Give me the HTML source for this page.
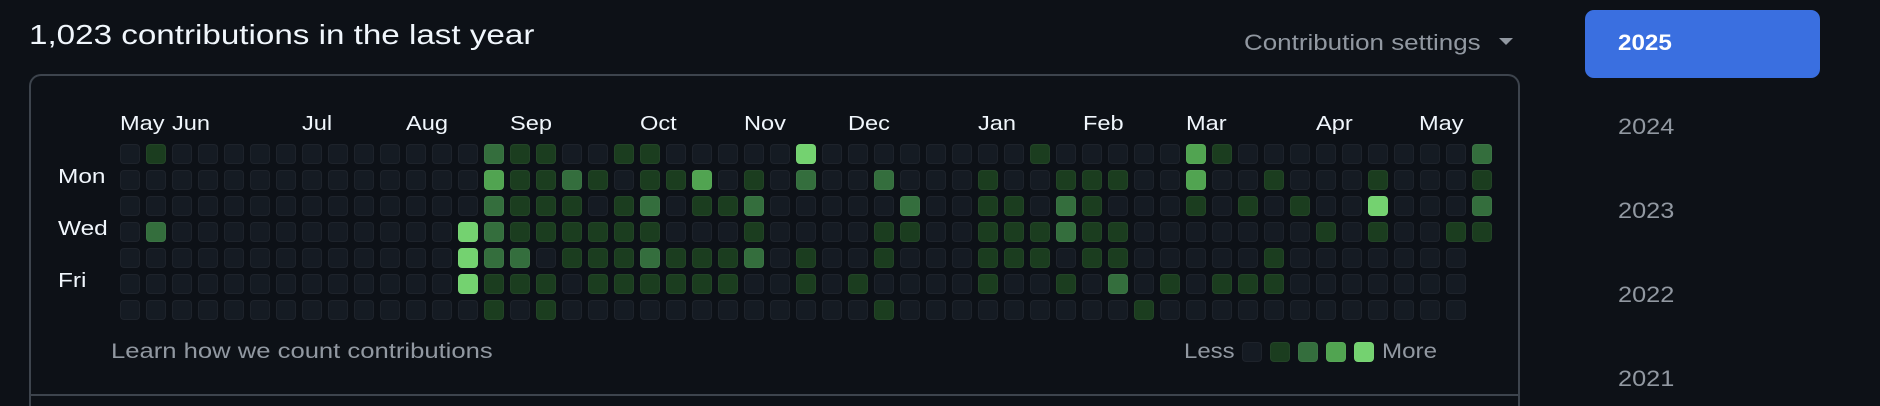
<!DOCTYPE html>
<html><head><meta charset="utf-8"><style>
html,body{margin:0;padding:0;background:#0d1117;width:1880px;height:406px;overflow:hidden;font-family:"Liberation Sans",sans-serif;position:relative}
.a{position:absolute;white-space:nowrap;transform-origin:0 50%}
.t{left:29px;top:19px;font-size:28px;color:#f0f6fc;transform:scaleX(1.185)}
.cs{left:1244px;top:30px;font-size:22px;color:#9198a1;transform:scaleX(1.18)}
.car{left:1499px;top:38px;width:0;height:0;border-left:7px solid transparent;border-right:7px solid transparent;border-top:7px solid #9198a1}
.box{left:29px;top:74px;width:1491px;height:332px;border:2px solid #3d444d;border-bottom:none;border-radius:12px 12px 0 0;box-sizing:border-box}
.hl{left:31px;top:394px;width:1487px;height:2px;background:#3d444d}
.m{font-size:20px;color:#f0f6fc;top:113px;transform:scaleX(1.18)}
.d{font-size:20px;color:#f0f6fc;left:58px;transform:scaleX(1.22)}
.c{position:absolute;width:20px;height:20px;border-radius:4px;box-sizing:border-box;border:1px solid rgba(255,255,255,0.04)}
.l0{background:#151b23}.l1{background:#1b3d1f}.l2{background:#346e3d}.l3{background:#51a451}.l4{background:#74d270}
.g{font-size:21px;color:#9198a1;top:340px}
.yb{left:1585px;top:10px;width:235px;height:68px;background:#3a6fe0;border-radius:9px}
.y{font-size:22px;left:1618px;color:#9198a1;transform:scaleX(1.15)}
</style></head><body>
<div class="a t">1,023 contributions in the last year</div>
<div class="a cs">Contribution settings</div>
<div class="a car"></div>
<div class="a box"></div>
<div class="a hl"></div>
<div class="a m" style="left:120px">May</div>
<div class="a m" style="left:172px">Jun</div>
<div class="a m" style="left:302px">Jul</div>
<div class="a m" style="left:406px">Aug</div>
<div class="a m" style="left:510px">Sep</div>
<div class="a m" style="left:640px">Oct</div>
<div class="a m" style="left:744px">Nov</div>
<div class="a m" style="left:848px">Dec</div>
<div class="a m" style="left:978px">Jan</div>
<div class="a m" style="left:1083px">Feb</div>
<div class="a m" style="left:1186px">Mar</div>
<div class="a m" style="left:1316px">Apr</div>
<div class="a m" style="left:1419px">May</div>
<div class="a d" style="top:166px">Mon</div>
<div class="a d" style="top:218px">Wed</div>
<div class="a d" style="top:270px">Fri</div>
<div id="grid"></div>
<div class="a g" style="left:111px;transform:scaleX(1.22)">Learn how we count contributions</div>
<div class="a g" style="left:1184px;transform:scaleX(1.14)">Less</div>
<div class="c l0" style="left:1242px;top:342px"></div>
<div class="c l1" style="left:1270px;top:342px"></div>
<div class="c l2" style="left:1298px;top:342px"></div>
<div class="c l3" style="left:1326px;top:342px"></div>
<div class="c l4" style="left:1354px;top:342px"></div>
<div class="a g" style="left:1382px;transform:scaleX(1.15)">More</div>
<div class="a yb"></div>
<div class="a y" style="top:30px;color:#fff;font-weight:bold;transform:scaleX(1.1)">2025</div>
<div class="a y" style="top:114px">2024</div>
<div class="a y" style="top:198px">2023</div>
<div class="a y" style="top:282px">2022</div>
<div class="a y" style="top:366px">2021</div>
<script>
var cols={
1:[1,0,0,2,0,0,0],
13:[0,0,0,4,4,4,0],
14:[2,3,2,2,2,1,1],
15:[1,1,1,1,2,1,0],
16:[1,1,1,1,0,1,1],
17:[0,2,1,1,1,0,0],
18:[0,1,0,1,1,1,0],
19:[1,0,1,1,1,1,0],
20:[1,1,2,1,2,1,0],
21:[0,1,0,0,1,1,0],
22:[0,3,1,0,1,1,0],
23:[0,0,1,0,1,1,0],
24:[0,1,2,1,2,0,0],
26:[4,2,0,0,1,1,0],
28:[0,0,0,0,0,1,0],
29:[0,2,0,1,1,0,1],
30:[0,0,2,1,0,0,0],
33:[0,1,1,1,1,1,0],
34:[0,0,1,1,1,0,0],
35:[1,0,0,1,1,0,0],
36:[0,1,2,2,0,1,0],
37:[0,1,1,1,1,0,0],
38:[0,1,0,1,1,2,0],
39:[0,0,0,0,0,0,1],
40:[0,0,0,0,0,1,0],
41:[3,3,1,0,0,0,0],
42:[1,0,0,0,0,1,0],
43:[0,0,1,0,0,1,0],
44:[0,1,0,0,1,1,0],
45:[0,0,1,0,0,0,0],
46:[0,0,0,1,0,0,0],
48:[0,1,4,1,0,0,0],
51:[0,0,0,1,0,0,0],
52:[2,1,2,1]
};
var h='';
for(var c=0;c<53;c++){var n=c==52?4:7;var a=cols[c]||[0,0,0,0,0,0,0];
for(var r=0;r<n;r++){h+='<div class="c l'+(a[r]||0)+'" style="left:'+(120+26*c)+'px;top:'+(144+26*r)+'px"></div>';}}
document.getElementById('grid').innerHTML=h;
</script>
</body></html>
